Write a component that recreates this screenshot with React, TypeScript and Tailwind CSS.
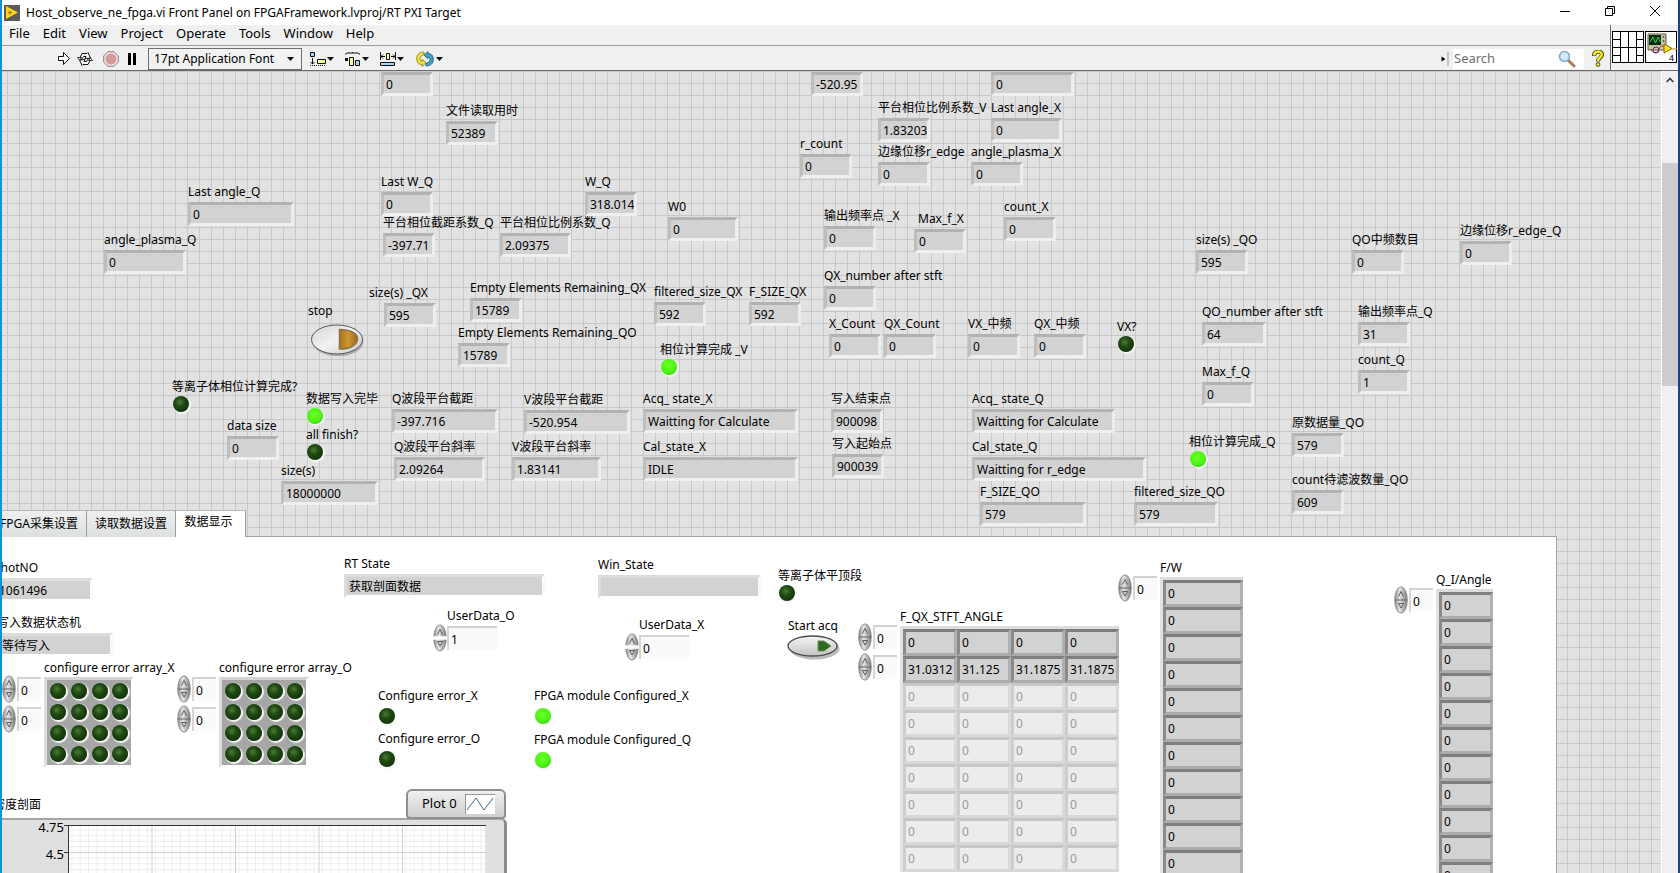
import { useState, type ReactNode } from 'react';
import { clsx } from 'clsx';

// top-left corner of the panel inside the window, item positions are window based
const ORIGIN = { x: 2, y: 70 };

type Field = {
  label: string;
  value: string;
  x: number;
  y: number;
  w?: number;
  dx?: number;
};

type Led = { label: string; x: number; y: number; on?: boolean; spaced?: boolean };

const FIELDS: Field[] = [
  { label: '', value: '0', x: 381, y: 71 },
  { label: '文件读取用时', value: '52389', x: 446, y: 120 },
  { label: 'Last angle_Q', value: '0', x: 188, y: 201, w: 106 },
  { label: 'angle_plasma_Q', value: '0', x: 104, y: 249, w: 82 },
  { label: 'Last W_Q', value: '0', x: 381, y: 191 },
  { label: '平台相位截距系数_Q', value: '-397.71', x: 383, y: 232 },
  { label: '平台相位比例系数_Q', value: '2.09375', x: 500, y: 232, w: 71 },
  { label: '', value: '-520.95', x: 811, y: 71 },
  { label: '', value: '0', x: 991, y: 71, w: 83 },
  { label: '平台相位比例系数_V', value: '1.83203', x: 878, y: 117 },
  { label: 'Last angle_X', value: '0', x: 991, y: 117, w: 71 },
  { label: 'r_count', value: '0', x: 800, y: 153 },
  { label: '边缘位移r_edge', value: '0', x: 878, y: 161 },
  { label: 'angle_plasma_X', value: '0', x: 971, y: 161 },
  { label: 'W_Q', value: '318.014', x: 585, y: 191 },
  { label: 'W0', value: '0', x: 668, y: 216, w: 70 },
  { label: '输出频率点 _X', value: '0', x: 824, y: 225 },
  { label: 'Max_f_X', value: '0', x: 914, y: 228, dx: 4 },
  { label: 'count_X', value: '0', x: 1004, y: 216 },
  { label: 'size(s) _QO', value: '595', x: 1196, y: 249 },
  { label: 'QO中频数目', value: '0', x: 1352, y: 249 },
  { label: '边缘位移r_edge_Q', value: '0', x: 1460, y: 240 },
  { label: 'size(s) _QX', value: '595', x: 384, y: 302, dx: -15 },
  { label: 'Empty Elements Remaining_QX', value: '15789', x: 470, y: 297 },
  { label: 'Empty Elements Remaining_QO', value: '15789', x: 458, y: 342 },
  { label: 'data size', value: '0', x: 227, y: 435 },
  { label: 'size(s)', value: '18000000', x: 281, y: 480, w: 97 },
  { label: 'Q波段平台截距', value: '-397.716', x: 392, y: 408, w: 106 },
  { label: 'Q波段平台斜率', value: '2.09264', x: 394, y: 456, w: 91 },
  { label: 'V波段平台截距', value: '-520.954', x: 524, y: 409, w: 106 },
  { label: 'V波段平台斜率', value: '1.83141', x: 512, y: 456, w: 89 },
  { label: 'filtered_size_QX', value: '592', x: 654, y: 301 },
  { label: 'F_SIZE_QX', value: '592', x: 749, y: 301 },
  { label: 'QX_number after stft', value: '0', x: 824, y: 285 },
  { label: 'X_Count', value: '0', x: 829, y: 333 },
  { label: 'QX_Count', value: '0', x: 884, y: 333 },
  { label: 'VX_中频', value: '0', x: 968, y: 333 },
  { label: 'QX_中频', value: '0', x: 1034, y: 333 },
  { label: 'Acq_ state_X', value: 'Waitting for Calculate', x: 643, y: 408, w: 155 },
  { label: 'Cal_state_X', value: 'IDLE', x: 643, y: 456, w: 155 },
  { label: '写入结束点', value: '900098', x: 831, y: 408 },
  { label: '写入起始点', value: '900039', x: 832, y: 453 },
  { label: 'Acq_ state_Q', value: 'Waitting for Calculate', x: 972, y: 408, w: 143 },
  { label: 'Cal_state_Q', value: 'Waitting for r_edge', x: 972, y: 456, w: 174 },
  { label: 'F_SIZE_QO', value: '579', x: 980, y: 501, w: 106 },
  { label: 'filtered_size_QO', value: '579', x: 1134, y: 501, w: 84 },
  { label: 'QO_number after stft', value: '64', x: 1202, y: 321, w: 64 },
  { label: '输出频率点_Q', value: '31', x: 1358, y: 321 },
  { label: 'count_Q', value: '1', x: 1358, y: 369 },
  { label: 'Max_f_Q', value: '0', x: 1202, y: 381 },
  { label: '原数据量_QO', value: '579', x: 1292, y: 432 },
  { label: 'count待滤波数量_QO', value: '609', x: 1292, y: 489 },
];

const LEDS: Led[] = [
  { label: '等离子体相位计算完成?', x: 172, y: 386 },
  { label: '数据写入完毕', x: 306, y: 398, on: true },
  { label: 'all finish?', x: 306, y: 434 },
  { label: '相位计算完成 _V', x: 660, y: 349, on: true },
  { label: 'VX?', x: 1117, y: 326 },
  { label: '相位计算完成_Q', x: 1189, y: 441, on: true },
];

const PAGE_FIELDS: Field[] = [
  { label: 'ShotNO', value: '1061496', x: -6, y: 577, w: 99 },
  { label: '写入数据状态机', value: '等待写入', x: -3, y: 632, w: 116 },
  { label: 'RT State', value: '获取剖面数据', x: 344, y: 573, w: 201 },
  { label: 'Win_State', value: '', x: 598, y: 574, w: 163 },
];

const PAGE_LEDS: Led[] = [
  { label: '等离子体平顶段', x: 778, y: 575 },
  { label: 'Configure error_X', x: 378, y: 695, spaced: true },
  { label: 'Configure error_O', x: 378, y: 738, spaced: true },
  { label: 'FPGA module Configured_X', x: 534, y: 695, on: true, spaced: true },
  { label: 'FPGA module Configured_Q', x: 534, y: 739, on: true, spaced: true },
];

const MENUS = ['File', 'Edit', 'View', 'Project', 'Operate', 'Tools', 'Window', 'Help'];

const STFT_ROWS = [
  ['0', '0', '0', '0'],
  ['31.0312', '31.125', '31.1875', '31.1875'],
  ...Array.from({ length: 7 }, () => ['0', '0', '0', '0']),
];

const ZERO_COLUMN = Array.from({ length: 11 }, () => ['0']);

function Place({ x, y, children }: { x: number; y: number; children: ReactNode }) {
  return (
    <div className="absolute" style={{ left: x - ORIGIN.x, top: y - ORIGIN.y }}>
      {children}
    </div>
  );
}

function Indicator({ field, onPage }: { field: Field; onPage?: boolean }) {
  const id = `ind-${field.x}-${field.y}`;
  return (
    <Place x={field.x} y={field.label ? field.y - 19 : field.y}>
      {field.label && (
        <label
          htmlFor={id}
          className="relative z-10 mb-px block w-0 leading-[18px] whitespace-nowrap"
          style={{ marginLeft: field.dx ?? 0 }}
        >
          {field.label}
        </label>
      )}
      <output
        id={id}
        className={clsx(
          'block h-6 overflow-hidden border-3 bg-[#d2d2d2] pl-0.5 leading-[19px] whitespace-nowrap',
          onPage
            ? 'border-t-[#dcdcdc] border-r-[#fafafa] border-b-white border-l-[#dcdcdc]'
            : 'border-t-[#b2b2b2] border-r-[#ededed] border-b-[#efefef] border-l-[#bebebe]',
        )}
        style={{ width: field.w ?? 52 }}
      >
        {field.value}
      </output>
    </Place>
  );
}

function Lamp({ on, className }: { on?: boolean; className?: string }) {
  return (
    <span
      className={clsx(
        'block size-4 rounded-full shadow-[1px_1px_1px_1px_#f6f6f6]',
        on
          ? 'bg-[radial-gradient(circle_at_45%_40%,#6dff2c_0%,#4cf413_55%,#2fae10_100%)]'
          : 'bg-[radial-gradient(circle_at_42%_38%,#4d7a35_0%,#1f4a12_35%,#12330a_75%,#0e2408_100%)]',
        className,
      )}
    />
  );
}

function LedIndicator({ led }: { led: Led }) {
  return (
    <Place x={led.x} y={led.y - 9}>
      <div
        className={clsx('flex w-0 flex-col whitespace-nowrap', led.spaced && 'gap-[3px]')}
        role="img"
        aria-label={led.label}
      >
        <span className="relative z-10 leading-[18px]">{led.label}</span>
        <Lamp on={led.on} className="ml-px w-4" />
      </div>
    </Place>
  );
}

function Spinner({ label, split }: { label: string; split?: boolean }) {
  return (
    <div className="relative h-7 w-3.5 shrink-0">
      <svg viewBox="0 0 14 28" className="absolute inset-0 size-full" aria-hidden="true">
        <defs>
          <linearGradient id="spin" x1="0" x2="1" y1="0" y2="0">
            <stop offset="0" stopColor="#8c8c8c" />
            <stop offset="0.4" stopColor="#e4e4e4" />
            <stop offset="1" stopColor="#7d7d7d" />
          </linearGradient>
        </defs>
        <ellipse cx="7" cy="14" rx="6.3" ry="13.2" fill="url(#spin)" stroke="#777" strokeWidth="0.7" />
        {split ? (
          <path d="M0 14h14" stroke="#fff" strokeWidth="3.5" />
        ) : (
          <path d="M1 14h12" stroke="#666" strokeWidth="1" />
        )}
        <path d="M4.5 10.5 7 5.5l2.5 5" fill="none" stroke="#444" strokeWidth="0.8" />
        <path d="M4.5 17.5h5L7 22z" fill="#d0d0d0" stroke="#444" strokeWidth="0.8" />
      </svg>
      <button type="button" aria-label={`${label} +`} className="absolute inset-x-0 top-0 h-1/2" />
      <button type="button" aria-label={`${label} -`} className="absolute inset-x-0 bottom-0 h-1/2" />
    </div>
  );
}

function NumberBox({
  id,
  initial,
  wide,
  label,
}: {
  id?: string;
  initial: string;
  wide?: boolean;
  label?: string;
}) {
  const [value, setValue] = useState(initial);
  return (
    <input
      id={id}
      aria-label={label}
      value={value}
      onChange={(e) => setValue(e.target.value)}
      className={clsx(
        'h-6 border-t-2 border-l-2 border-t-[#d2d2d2] border-l-[#d6d6d6] bg-[#fafafa] pl-0.5 leading-[18px] outline-none',
        wide ? 'w-[50px]' : 'w-6',
      )}
    />
  );
}

function IndexControl({ x, y, name }: { x: number; y: number; name: string }) {
  return (
    <Place x={x} y={y}>
      <div className="flex items-center gap-px">
        <Spinner label={name} />
        <NumberBox initial="0" label={name} />
      </div>
    </Place>
  );
}

function UserData({ label, value, x, y }: { label: string; value: string; x: number; y: number }) {
  return (
    <Place x={x} y={y}>
      <label htmlFor={label} className="ml-3.5 block leading-4">
        {label}
      </label>
      <div className="flex items-center">
        <Spinner label={label} split />
        <NumberBox id={label} initial={value} wide />
      </div>
    </Place>
  );
}

function LedArray({ label, x, y }: { label: string; x: number; y: number }) {
  return (
    <Place x={x} y={y}>
      <div className="w-0 leading-[18px] whitespace-nowrap">{label}</div>
      <div className="w-[90px] border-3 border-t-[#d4d4d4] border-r-white border-b-white border-l-[#dedede]">
        <div className="grid grid-cols-4 gap-[5px] bg-[#a6a6a6] p-[3px]">
          {Array.from({ length: 16 }, (_, i) => (
            <Lamp key={i} className="w-4" />
          ))}
        </div>
      </div>
    </Place>
  );
}

function ArrayTable({
  label,
  rows,
  x,
  y,
  cell,
}: {
  label: string;
  rows: string[][];
  x: number;
  y: number;
  cell: string;
}) {
  return (
    <Place x={x} y={y}>
      <table className="border-separate border-spacing-0 border-t-3 border-l-3 border-t-[#dcdcdc] border-l-[#e2e2e2]">
        <caption className="text-left leading-[18px] whitespace-nowrap">{label}</caption>
        <tbody>
          {rows.map((row, r) => (
            <tr key={r}>
              {row.map((value, c) => {
                const dim = rows.length === 9 && r > 1;
                return (
                  <td key={c} className="p-0">
                    <div
                      className={clsx(
                        'h-[27px] overflow-hidden border-3 pl-0.5 leading-[22px]',
                        cell,
                        dim
                          ? 'border-t-[#c6c6c6] border-r-[#dadada] border-b-[#d8d8d8] border-l-[#cdcdcd] bg-[#ececec] text-[#9a9a9a]'
                          : 'border-t-[#7e7e7e] border-r-[#b0b0b0] border-b-[#acacac] border-l-[#8a8a8a] bg-[#d2d2d2]',
                      )}
                    >
                      {value}
                    </div>
                  </td>
                );
              })}
            </tr>
          ))}
        </tbody>
      </table>
    </Place>
  );
}

function DensityGraph() {
  return (
    <>
      <Place x={-7} y={795}>
        <span className="leading-[18px] whitespace-nowrap">密度剖面</span>
      </Place>
      <Place x={-20} y={817}>
        <div className="flex h-[400px] w-[527px] rounded-tr-md border-t-2 border-r-3 border-t-[#a5a5a5] border-r-[#8c8c8c] bg-[#e0e0e0] pt-[5px]">
          <div className="-mt-[7px] flex w-[84px] flex-col items-end gap-[9px] text-[13px] leading-[18px]">
            <span>4.75</span>
            <span>4.5</span>
          </div>
          <svg className="h-[200px] w-[424px]" viewBox="0 0 424 200" aria-hidden="true">
            <defs>
              <pattern id="minor" width="8.35" height="5.6" patternUnits="userSpaceOnUse">
                <path d="M8 0V6M0 5.1H9" stroke="#ececec" />
              </pattern>
              <pattern id="major" x="5" width="83.5" height="28" patternUnits="userSpaceOnUse">
                <path d="M83 0V28M0 27.5H84" stroke="#d0d0d0" />
              </pattern>
            </defs>
            <rect x="5" width="417" height="200" fill="#fff" />
            <rect x="5" width="417" height="200" fill="url(#minor)" />
            <rect x="5" width="417" height="200" fill="url(#major)" />
            <path d="M0 .5H422M0 27.5H5" stroke="#333" />
            <path d="M4.5 0V200" stroke="#333" />
          </svg>
        </div>
      </Place>
      <Place x={406} y={788}>
        <div className="flex h-[30px] w-[100px] items-center rounded-t-md rounded-b-sm border-2 border-[#8f8f8f] bg-linear-to-b from-[#efefef] to-[#cfcfcf] pl-3.5">
          <span className="text-[13px]">Plot 0</span>
          <svg viewBox="0 0 30 20" className="ml-2 h-5 w-[30px]" aria-hidden="true">
            <rect width="30" height="20" fill="#fff" />
            <path d="M0 20V0h30" fill="none" stroke="#777" strokeWidth="1.5" />
            <path d="M2 16 11 4l8 12 9-12" fill="none" stroke="#38688c" />
          </svg>
        </div>
      </Place>
    </>
  );
}

function StopButton() {
  return (
    <Place x={308} y={301}>
      <span className="leading-[18px]">stop</span>
      <button type="button" aria-label="stop" className="mt-1 ml-0.5 block">
        <svg viewBox="0 0 54 33" className="h-[33px] w-[54px]">
          <defs>
            <linearGradient id="stopFace" x1="0" x2="1" y1="0" y2="1">
              <stop offset="0" stopColor="#d4d4d4" />
              <stop offset="0.5" stopColor="#f2f2f2" />
              <stop offset="1" stopColor="#c8c8c8" />
            </linearGradient>
            <linearGradient id="stopGlow" x1="0" x2="1" y1="0" y2="0">
              <stop offset="0" stopColor="#a9741c" />
              <stop offset="0.5" stopColor="#cf9630" />
              <stop offset="1" stopColor="#9c6a18" />
            </linearGradient>
          </defs>
          <ellipse cx="28" cy="17.5" rx="25.5" ry="14.8" fill="#8a8a94" opacity="0.6" />
          <ellipse cx="27" cy="15.5" rx="25.5" ry="14.5" fill="url(#stopFace)" stroke="#555" />
          <path
            d="M29.5 5.5C40 5.500 47.500 9 47.500 15S40 25 29.500 25z"
            fill="url(#stopGlow)"
            stroke="#8d7444"
            strokeWidth="1.500"
          />
        </svg>
      </button>
    </Place>
  );
}

function StartButton() {
  return (
    <Place x={788} y={616}>
      <span className="leading-[18px] whitespace-nowrap">Start acq</span>
      <button type="button" aria-label="Start acq" className="-ml-px block">
        <svg viewBox="0 0 54 26" className="h-[26px] w-[54px]">
          <defs>
            <linearGradient id="startFace" x1="0" x2="0" y1="0" y2="1">
              <stop offset="0" stopColor="#f4f4f4" />
              <stop offset="1" stopColor="#c4c4c4" />
            </linearGradient>
          </defs>
          <ellipse cx="27.500" cy="13.500" rx="25" ry="11" fill="#bbb" />
          <ellipse cx="25.500" cy="11" rx="24.500" ry="10" fill="url(#startFace)" stroke="#4c4c4c" strokeWidth="1.300" />
          <path d="M31 6h6l7 5-7 5h-6z" fill="#2f6b1c" stroke="#6f8a63" />
        </svg>
      </button>
    </Place>
  );
}

function TabPage() {
  const [tab, setTab] = useState(2);
  const names = ['FPGA采集设置', '读取数据设置', '数据显示'];
  return (
    <>
      <Place x={-8} y={509}>
        <div role="tablist" className="flex items-end">
          {names.map((name, i) => (
            <button
              key={name}
              type="button"
              role="tab"
              aria-selected={tab === i}
              onClick={() => setTab(i)}
              className={clsx(
                'relative z-10 h-[27px] border-t border-r border-t-[#b5b5b5] border-r-[#9c9c9c] whitespace-nowrap',
                tab === i ? 'bg-white pr-3 pb-1 pl-2' : 'bg-linear-to-b from-[#efefef] to-[#dde0e0] px-2',
                i === 0 && 'w-[95px]',
                i === 1 && 'w-[89px]',
                i === 2 && 'w-[70px]',
              )}
            >
              {name}
            </button>
          ))}
        </div>
      </Place>
      <Place x={-8} y={535}>
        <div className="h-[600px] w-[1565px] border-t border-r border-[#a2a2a2] bg-white" />
      </Place>
      {PAGE_FIELDS.map((field) => (
        <Indicator key={field.label} field={field} onPage />
      ))}
      {PAGE_LEDS.map((led) => (
        <LedIndicator key={led.label} led={led} />
      ))}
      <UserData label="UserData_O" value="1" x={433} y={607} />
      <UserData label="UserData_X" value="0" x={625} y={616} />
      <LedArray label="configure error array_X" x={44} y={658} />
      <LedArray label="configure error array_O" x={219} y={658} />
      <IndexControl name="array_X row" x={2} y={674} />
      <IndexControl name="array_X column" x={2} y={704} />
      <IndexControl name="array_O row" x={177} y={674} />
      <IndexControl name="array_O column" x={177} y={704} />
      <StartButton />
      <IndexControl name="angle row" x={858} y={622} />
      <IndexControl name="angle column" x={858} y={652} />
      <ArrayTable label="F_QX_STFT_ANGLE" rows={STFT_ROWS} x={900} y={607} cell="w-[54px]" />
      <IndexControl name="F/W index" x={1118} y={573} />
      <ArrayTable label="F/W" rows={ZERO_COLUMN} x={1160} y={558} cell="w-20" />
      <IndexControl name="Q_I/Angle index" x={1394} y={585} />
      <ArrayTable label="Q_I/Angle" rows={ZERO_COLUMN} x={1436} y={570} cell="w-[54px]" />
      <DensityGraph />
    </>
  );
}

function Caret() {
  return (
    <svg viewBox="0 0 7 4" className="h-1 w-[7px]" aria-hidden="true">
      <path d="M0 0h7L3.500 4z" fill="#111" />
    </svg>
  );
}

function TitleBar() {
  return (
    <header className="flex h-[25px] shrink-0 items-center bg-white pl-0.5">
      <svg viewBox="0 0 16 16" className="mr-1.5 size-4" aria-hidden="true">
        <rect width="16" height="16" fill="#5b5b5b" />
        <path d="M2 1v13l12-6.500z" fill="#ffd70f" />
        <path d="M4 7.500h4M6 5.500v4" stroke="#8a6d00" />
      </svg>
      <h1 className="text-xs leading-5">
        Host_observe_ne_fpga.vi Front Panel on FPGAFramework.lvproj/RT PXI Target
      </h1>
      <div className="ml-auto flex gap-[33px] pr-[17px] pb-1">
        <button type="button" aria-label="Minimize">
          <svg viewBox="0 0 12 12" className="size-3">
            <path d="M1 6.500h10" stroke="#000" />
          </svg>
        </button>
        <button type="button" aria-label="Restore">
          <svg viewBox="0 0 12 12" className="size-3" fill="none" stroke="#000">
            <path d="M1.500 3.500h7v7h-7zM3.500 3.500v-2h7v7h-2" />
          </svg>
        </button>
        <button type="button" aria-label="Close">
          <svg viewBox="0 0 12 12" className="size-3">
            <path d="m1 1 10 10M11 1 1 11" stroke="#000" />
          </svg>
        </button>
      </div>
    </header>
  );
}

function ToolBar() {
  return (
    <div className="flex h-6 items-center pt-px pl-14">
      <button type="button" aria-label="Run">
        <svg viewBox="0 0 12 13" className="h-[13px] w-3" fill="#fff" stroke="#111">
          <path d="M.5 4.500h5v-4l6 6-6 6v-4h-5z" />
        </svg>
      </button>
      <button type="button" aria-label="Run continuously" className="ml-[7px]">
        <svg viewBox="0 0 16 14" className="h-3.5 w-4" fill="#fff" stroke="#111">
          <path d="M2.500 6.500 5 1.500h5l1-1 2.500 5.500-5.500.500 1-2H6.500l-2 3z" />
          <path d="M13.500 7.500 11 12.500H6l-1 1L2.500 8l5.500-.500-1 2h2.500l2-3z" />
          <path d="M.5 5.500h4L2.500 8zM15.500 8.500h-4L13.500 6z" strokeWidth="0.800" />
        </svg>
      </button>
      <button type="button" aria-label="Abort" className="ml-2.5">
        <svg viewBox="0 0 16 16" className="size-4">
          <path d="M5 .7h6L15.300 5v6L11 15.300H5L.7 11V5z" fill="#f1e4e4" stroke="#8d7d7d" />
          <circle cx="8" cy="8" r="5.500" fill="#d79a9c" />
        </svg>
      </button>
      <button type="button" aria-label="Pause" className="ml-2">
        <svg viewBox="0 0 10 12" className="h-3 w-2.5">
          <path d="M1 0h3v12H1zM6 0h3v12H6z" fill="#000" />
        </svg>
      </button>
      <div className="relative ml-[11px] flex h-[22px] w-[154px] items-center border border-[#6e6e6e] bg-[#f2f2f2]">
        <select aria-label="Font" className="h-full w-full appearance-none pl-[5px] text-xs outline-none">
          <option>17pt Application Font</option>
        </select>
        <span className="pointer-events-none absolute right-[7px] flex">
          <Caret />
        </span>
      </div>
      <button type="button" aria-label="Align objects" className="ml-2 flex items-center gap-px">
        <svg viewBox="0 0 16 14" className="h-3.5 w-4">
          <path d="M.5.5h4v4h-4z" fill="#9fd8f5" stroke="#111" />
          <path d="M2.500 6v6M.5 10l2 2 2-2" fill="none" stroke="#111" />
          <path d="M0 13.500h16" stroke="#111" strokeDasharray="1 1" />
          <path d="M7.500 7.500h8v4h-8z" fill="#ffffa0" stroke="#111" />
        </svg>
        <Caret />
      </button>
      <button type="button" aria-label="Distribute objects" className="ml-[11px] flex items-center gap-px">
        <svg viewBox="0 0 16 14" className="h-3.5 w-4">
          <path d="M0 2.500 2 1h11l2 1.500M7.500 0v1" fill="none" stroke="#111" />
          <path d="M0 7.500h3" stroke="#111" strokeWidth="3" />
          <path d="M4.500 5.500h4v8h-4z" fill="#ffffa0" stroke="#111" />
          <path d="M10.500 8.500h4v5h-4z" fill="#9fd8f5" stroke="#111" />
        </svg>
        <Caret />
      </button>
      <button type="button" aria-label="Resize objects" className="ml-[11px] flex items-center gap-px">
        <svg viewBox="0 0 16 14" className="h-3.5 w-4">
          <path
            d="M.5 0v8M15.500 0v8M1 4.500h4M11 4.500h4M3 2.500l-2 2 2 2M13 2.500l2 2-2 2"
            fill="none"
            stroke="#111"
          />
          <path d="M6.500 1.500h3v6h-3z" fill="#ffffa0" stroke="#111" />
          <path d="M.5 10.500h14v3H.5z" fill="#9fd8f5" stroke="#111" />
        </svg>
        <Caret />
      </button>
      <button type="button" aria-label="Reorder" className="ml-3 flex items-center gap-0.5">
        <svg viewBox="0 0 18 16" className="h-4 w-[18px]">
          <path
            d="M8 1C3 1 .7 4 .7 7.500c0 4 2 6 5.300 6v2l4-3.700-4-3.500v2C4 10 3.500 8 4.500 6S7 4 8 4z"
            fill="#f3e13a"
            stroke="#857a12"
            strokeWidth="0.800"
          />
          <path
            d="M10 15c5 0 7.300-3 7.300-6.500 0-4-2-6-5.300-6v-2L8 4.200l4 3.500v-2c2 .3 2.500 2.300 1.500 4.300s-2.500 2-3.500 2z"
            fill="#3fa3cf"
            stroke="#155a7c"
            strokeWidth="0.800"
          />
        </svg>
        <Caret />
      </button>
      <div className="ml-auto flex items-center">
        <svg viewBox="0 0 7 14" className="h-3.5 w-2" aria-hidden="true">
          <path d="M0 4.500v5L4 7z" fill="#000" />
          <path d="M6.500 0v14" stroke="#999" />
        </svg>
        <div className="ml-1 flex h-5 w-[131px] items-center bg-white pr-2">
          <input
            type="search"
            aria-label="Search"
            placeholder="Search"
            className="w-full min-w-0 flex-1 pl-px text-[13px] outline-none placeholder:text-[#707070]"
          />
          <svg viewBox="0 0 18 18" className="size-[18px]" aria-hidden="true">
            <path d="m10.500 10.500 5.500 5.500" stroke="#b07a5a" strokeWidth="3" strokeLinecap="round" />
            <circle cx="6.500" cy="6.500" r="5" fill="#cfeafb" stroke="#7fa9c6" strokeWidth="1.500" />
          </svg>
        </div>
        <button type="button" aria-label="Help" className="mr-1.5 ml-2">
          <svg viewBox="0 0 12 17" className="h-[17px] w-3">
            <path d="M2 6c0-5.500 8-5.500 8-1.500C10 7.500 6 7.500 6 11.500" fill="none" stroke="#333" strokeWidth="4" />
            <path d="M2.200 5.500c0-5 7.500-5 7.500-1C9.700 7.500 6 7.500 6 11" fill="none" stroke="#f7ec13" strokeWidth="2.600" />
            <circle cx="6" cy="14.500" r="1.900" fill="#f7ec13" stroke="#333" strokeWidth="0.900" />
          </svg>
        </button>
      </div>
    </div>
  );
}

function ViIcons() {
  return (
    <div className="flex w-[68px] shrink-0 items-start gap-px border-l border-[#6b6b6b] pt-1.5 pl-px">
      <svg viewBox="0 0 32 32" className="size-8" aria-hidden="true">
        <rect x="0.500" y="0.500" width="31" height="31" fill="#fff" stroke="#000" />
        <path
          d="M8.500 0v32M16.500 0v32M24.500 0v32M0 16.500h32M0 8.500h8M0 24.500h8M24 8.500h8M24 24.500h8"
          stroke="#000"
        />
      </svg>
      <svg viewBox="0 0 32 32" className="size-8" aria-hidden="true">
        <rect x="0.500" y="0.500" width="31" height="31" fill="#fff" stroke="#000" />
        <path d="M3 3h18v16H3z" fill="#c9c6a4" stroke="#5e5c48" />
        <path d="M4 4h12v10H4z" fill="#042c10" />
        <path d="M5 11 8 6l2.500 6L13 6l2.500 5" fill="none" stroke="#30d850" />
        <circle cx="18.500" cy="6" r="1" fill="#555" />
        <circle cx="18.500" cy="10" r="1" fill="#555" />
        <path d="M6 18c2 5 6 5 8 0s4-3 6-1" fill="none" stroke="#d02020" />
        <circle cx="11" cy="19" r="3" fill="none" stroke="#5a2a90" />
        <path d="M19 13v9l8-4.500z" fill="#ffe11a" stroke="#7a6a00" />
        <path d="M27 18h5" stroke="#e07a10" />
        <text x="24" y="29.500" fontSize="9" fontFamily="Liberation Sans, sans-serif">
          4
        </text>
      </svg>
    </div>
  );
}

export default function App() {
  return (
    <div className="flex h-screen flex-col overflow-hidden border-r-2 border-l-2 border-r-[#1c3f8e] border-l-[#1290dc] bg-[#f0f0f0] font-['Noto_Sans','Noto_Sans_CJK_SC',sans-serif] text-xs text-black">
      <TitleBar />
      <div className="flex shrink-0 border-b border-[#6b6b6b]">
        <div className="min-w-0 flex-1">
          <nav className="flex h-[21px] items-center gap-[13px] border-b border-[#9b9b9b] pb-1 pl-[7px] text-[13px]">
            {MENUS.map((name) => (
              <button key={name} type="button" className="leading-4">
                {name}
              </button>
            ))}
          </nav>
          <ToolBar />
        </div>
        <ViIcons />
      </div>
      <div className="flex min-h-0 flex-1">
        <main className="relative min-w-0 flex-1 overflow-hidden bg-[#e2e2e2] bg-[linear-gradient(to_right,#c8c8c8_1px,transparent_1px),linear-gradient(to_bottom,#c8c8c8_1px,transparent_1px)] bg-[size:12px_12px] bg-[position:5px_0px]">
          {FIELDS.map((field) => (
            <Indicator key={`${field.x}-${field.y}`} field={field} />
          ))}
          {LEDS.map((led) => (
            <LedIndicator key={led.label} led={led} />
          ))}
          <StopButton />
          <TabPage />
        </main>
        <div className="flex w-[17px] shrink-0 flex-col items-center border-l border-white bg-[#f0f0f0]">
          <button type="button" aria-label="Scroll up" className="flex h-[17px] items-center">
            <svg viewBox="0 0 8 6" className="h-1.5 w-2">
              <path d="m.7 5 3.300-3.500L7.300 5" fill="none" stroke="#444" strokeWidth="1.800" />
            </svg>
          </button>
          <div className="mt-[75px] h-[223px] w-full bg-[#cdcdcd]" />
        </div>
      </div>
    </div>
  );
}
